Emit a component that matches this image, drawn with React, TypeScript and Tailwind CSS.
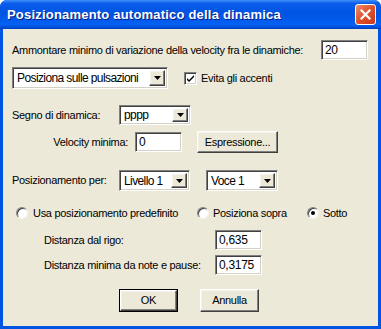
import React from "react";

const sunken =
  "bg-white border border-t-[#808080] border-l-[#808080] border-b-white border-r-white shadow-[inset_1px_1px_0_#404040,inset_-1px_-1px_0_#d4d0c8]";
const raised =
  "bg-[#ECE9D8] border border-t-white border-l-white border-b-[#404040] border-r-[#404040] shadow-[inset_-1px_-1px_0_#808080,inset_1px_1px_0_#f4f2ea]";

function Field({ value, w }: { value: string; w: string }) {
  return (
    <div className={`${sunken} ${w} h-[20px] flex items-center pl-[3px] text-[12px] leading-none`}>
      {value}
    </div>
  );
}

function Combo({ value, w, h = "h-[21px]" }: { value: string; w: string; h?: string }) {
  return (
    <div className={`${sunken} ${w} ${h} flex items-center p-[2px]`}>
      <div className="flex-1 pl-[2px] text-[12px] tracking-[-0.6px] leading-none whitespace-nowrap overflow-hidden">{value}</div>
      <div className={`${raised} w-[16px] h-full flex items-center justify-center shrink-0`}>
        <svg width="7" height="4" viewBox="0 0 7 4">
          <path d="M0 0h7L3.5 4z" fill="#000" />
        </svg>
      </div>
    </div>
  );
}

function Button({ label, def }: { label: string; def?: boolean }) {
  const inner = (
    <div className={`${raised} w-full h-full flex items-center justify-center text-[11px]`}>{label}</div>
  );
  if (def)
    return <div className="w-[59px] h-[23px] border border-black">{inner}</div>;
  return <div className="w-[59px] h-[23px]">{inner}</div>;
}

function Radio({ on }: { on?: boolean }) {
  return (
    <div className="w-[12px] h-[12px] rounded-full bg-white border border-t-[#808080] border-l-[#808080] border-b-[#f4f2ea] border-r-[#f4f2ea] flex items-center justify-center shadow-[inset_1px_1px_0_#404040]">
      {on && <div className="w-[4px] h-[4px] rounded-full bg-black" />}
    </div>
  );
}

export default function App() {
  return (
    <div className="w-[381px] h-[329px] flex flex-col bg-[#0054E3] text-black font-['Liberation_Sans',sans-serif] text-[11px] tracking-[-0.3px] whitespace-nowrap rounded-t-[7px] overflow-hidden">
      <div className="h-[29px] flex items-center pl-[7px] pr-[5px] bg-[linear-gradient(to_bottom,#3E8EF8_0%,#0A5DEA_12%,#0054E3_45%,#0361F3_85%,#0050DA_93%,#0040C0_100%)]">
        <div className="flex-1 text-white font-bold text-[13px] [text-shadow:1px_1px_0_#0A1E80] tracking-[0.2px]">
          Posizionamento automatico della dinamica
        </div>
        <div className="w-[21px] h-[21px] rounded-[3px] border border-white bg-[linear-gradient(135deg,#EE8A6A_0%,#E0512B_50%,#C8391A_100%)] flex items-center justify-center">
          <svg width="11" height="11" viewBox="0 0 11 11">
            <path d="M1.5 1.5L9.5 9.5M9.5 1.5L1.5 9.5" stroke="#fff" strokeWidth="2.2" strokeLinecap="square" />
          </svg>
        </div>
      </div>
      <div className="flex-1 mx-[3px] mb-[3px] bg-[#ECE9D8] flex flex-col pl-[9px] pr-[9px]">
        <div className="mt-[11px] h-[20px] flex items-center justify-between">
          <span>Ammontare minimo di variazione della velocity fra le dinamiche:</span>
          <div className="mr-[1px]">
            <Field value="20" w="w-[47px]" />
          </div>
        </div>
        <div className="mt-[7px] h-[22px] flex items-center">
          <Combo value="Posiziona sulle pulsazioni" w="w-[156px]" h="h-[22px]" />
          <div className={`ml-[16px] w-[13px] h-[13px] ${sunken} flex items-center justify-center`}>
            <svg width="9" height="9" viewBox="0 0 9 9">
              <path d="M1 4l2 2 5-5v2L3 8 1 6z" fill="#000" />
            </svg>
          </div>
          <span className="ml-[4px]">Evita gli accenti</span>
        </div>
        <div className="mt-[16px] h-[20px] flex items-center">
          <span className="w-[107px]">Segno di dinamica:</span>
          <Combo value="pppp" w="w-[72px]" h="h-[20px]" />
        </div>
        <div className="mt-[6px] h-[22px] flex items-center">
          <span className="w-[116px] text-right">Velocity minima:</span>
          <div className="ml-[7px]">
            <Field value="0" w="w-[47px]" />
          </div>
          <div className="ml-[15px] w-[81px] h-[22px]">
            <div className={`${raised} w-full h-full flex items-center justify-center text-[11px]`}>Espressione...</div>
          </div>
        </div>
        <div className="mt-[17px] h-[21px] flex items-center">
          <span className="w-[107px]">Posizionamento per:</span>
          <Combo value="Livello 1" w="w-[71px]" />
          <div className="ml-[16px]">
            <Combo value="Voce 1" w="w-[72px]" />
          </div>
        </div>
        <div className="mt-[15px] h-[14px] flex items-center">
          <div className="ml-[4px] w-[181px] flex items-center">
            <Radio />
            <span className="ml-[5px]">Usa posizionamento predefinito</span>
          </div>
          <div className="w-[110px] flex items-center">
            <Radio />
            <span className="ml-[4px]">Posiziona sopra</span>
          </div>
          <div className="flex items-center">
            <Radio on />
            <span className="ml-[4px]">Sotto</span>
          </div>
        </div>
        <div className="mt-[10px] h-[20px] flex items-center">
          <span className="ml-[32px] w-[171px]">Distanza dal rigo:</span>
          <Field value="0,635" w="w-[47px]" />
        </div>
        <div className="mt-[5px] h-[20px] flex items-center">
          <span className="ml-[32px] w-[171px]">Distanza minima da note e pause:</span>
          <Field value="0,3175" w="w-[47px]" />
        </div>
        <div className="mt-[14px] h-[23px] flex items-center">
          <div className="ml-[107px]">
            <Button label="OK" def />
          </div>
          <div className="ml-[22px]">
            <Button label="Annulla" />
          </div>
        </div>
      </div>
    </div>
  );
}
